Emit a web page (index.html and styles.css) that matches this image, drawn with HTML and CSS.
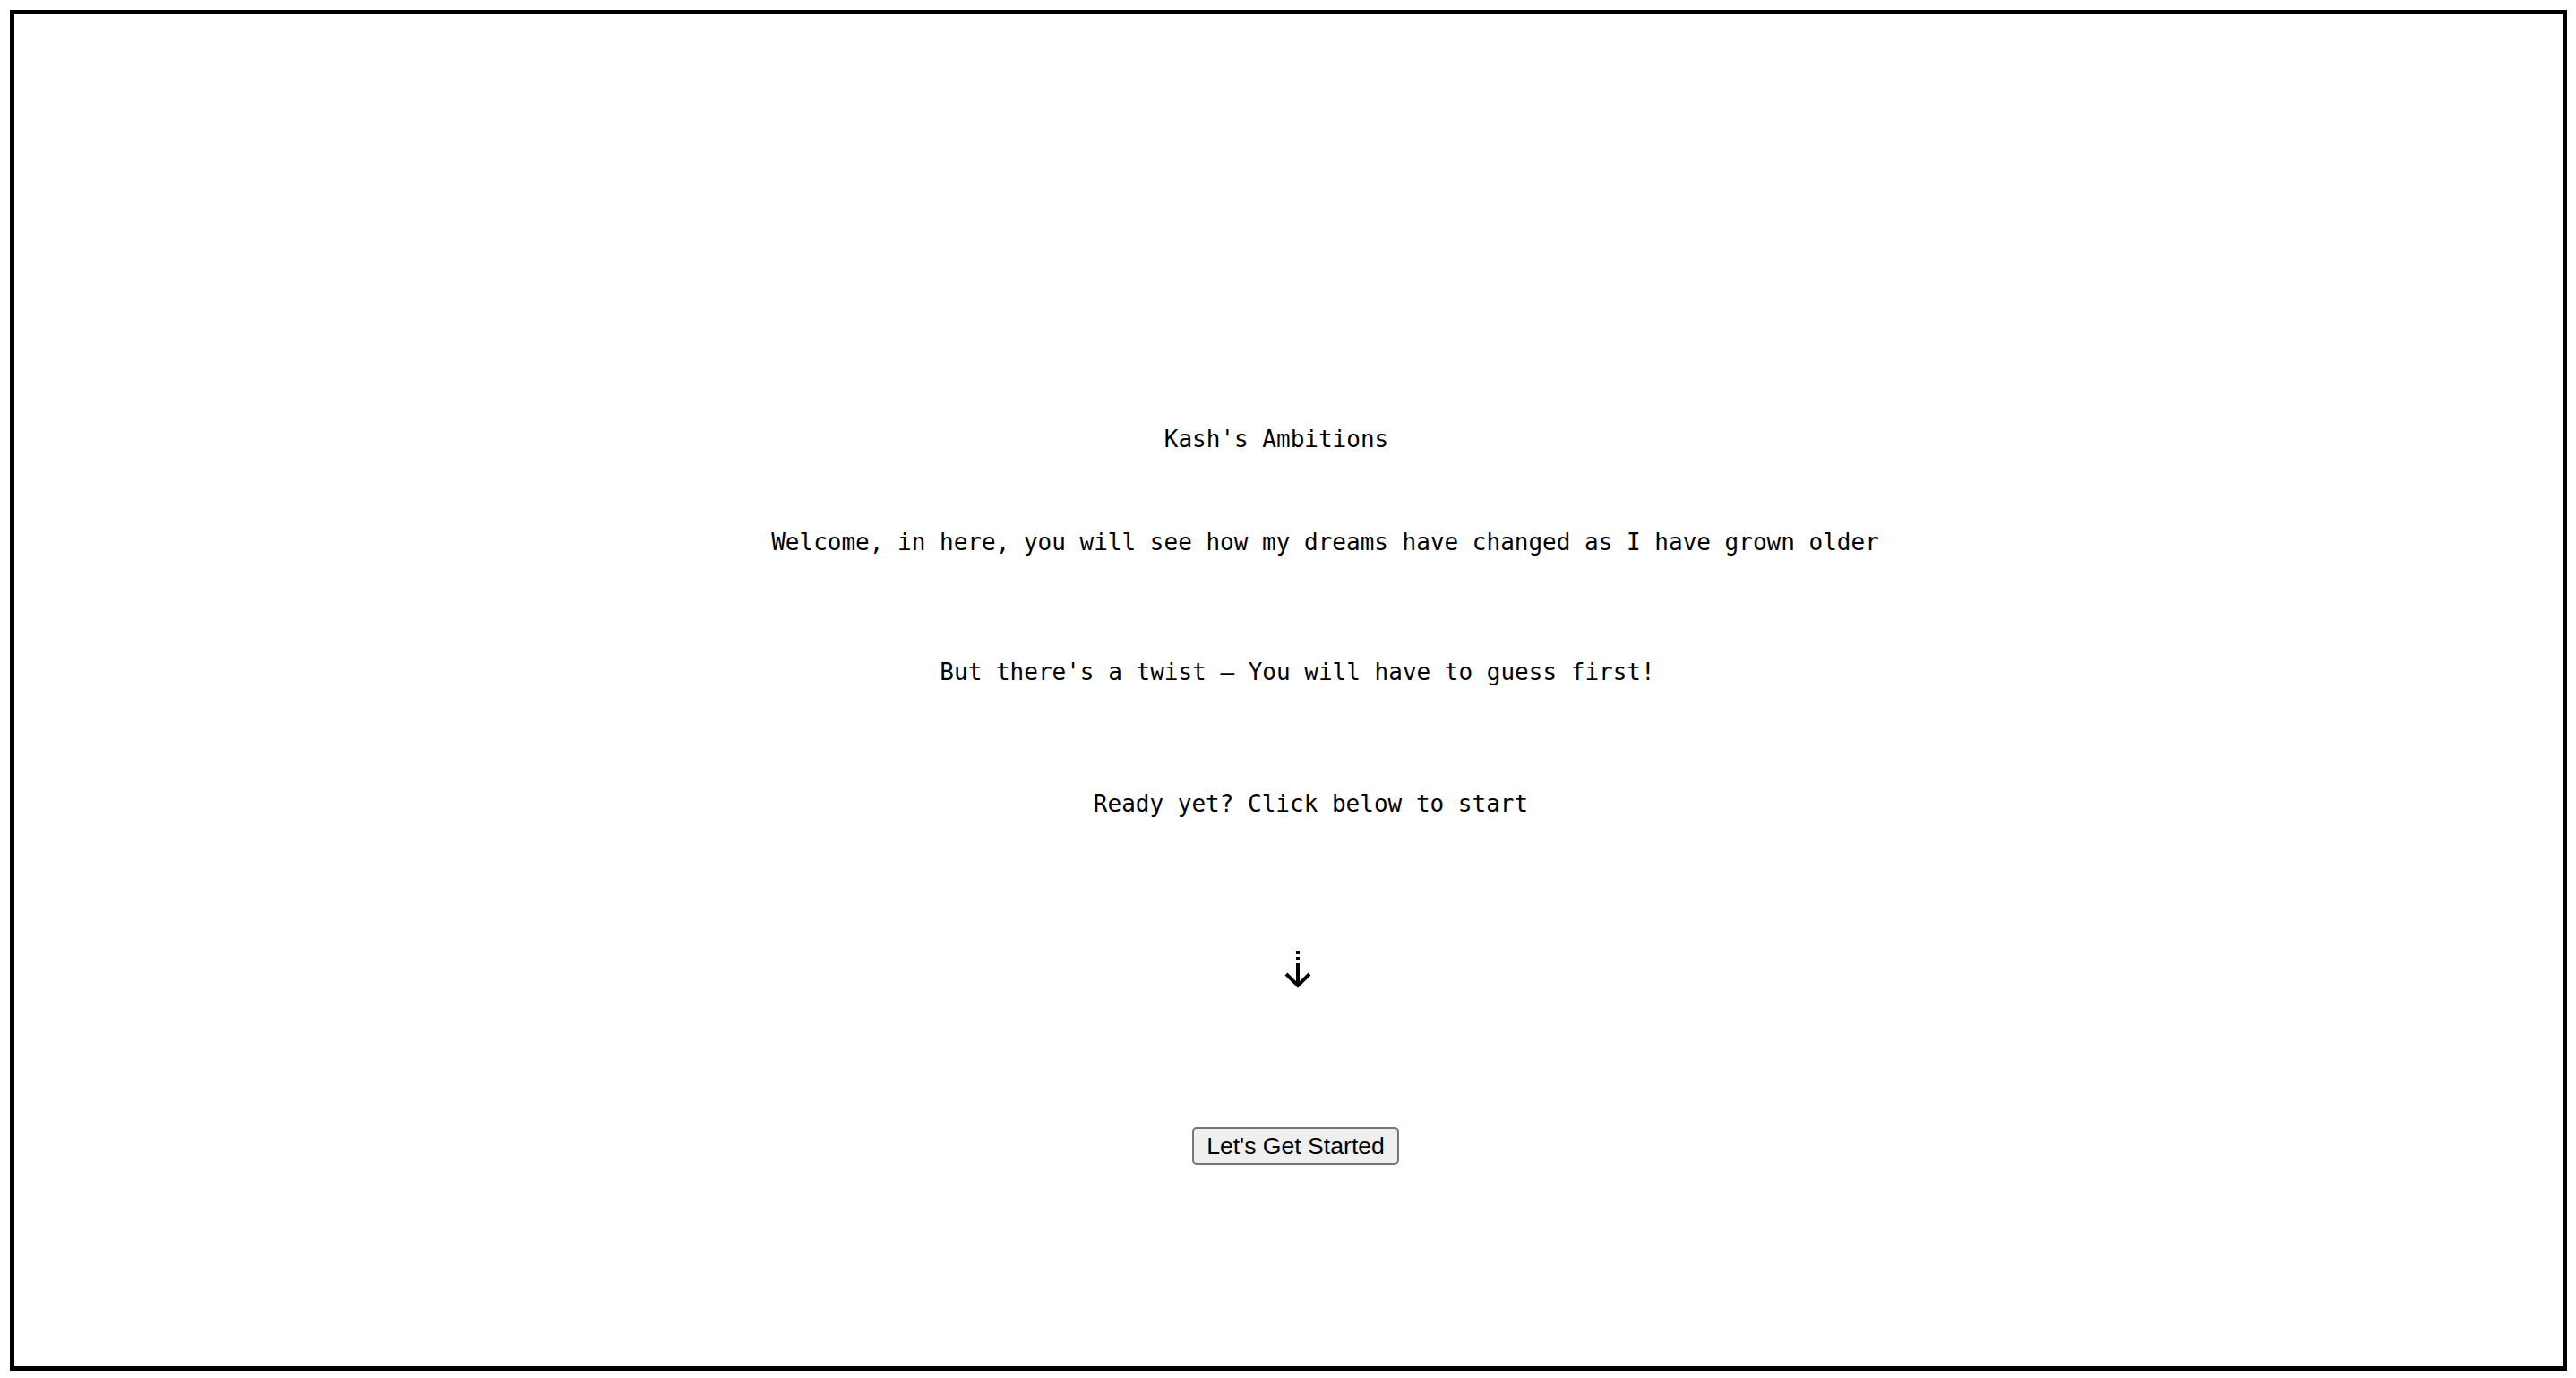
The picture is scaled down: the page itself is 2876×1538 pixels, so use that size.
FILE: index.html
```html
<!DOCTYPE html>
<html lang="en">
<head>
<meta charset="utf-8">
<title>Kash's Ambitions</title>
<link rel="stylesheet" href="styles.css">
</head>
<body>
<main class="frame">
  <h1 class="title">Kash's Ambitions</h1>
  <p class="line welcome">Welcome, in here, you will see how my dreams have changed as I have grown older</p>
  <p class="line twist">But there's a twist – You will have to guess first!</p>
  <p class="line ready">Ready yet? Click below to start</p>
  <div class="arrow">
    <svg width="30" height="42" viewBox="0 0 30 42" aria-hidden="true">
      <rect x="13" y="0" width="4" height="4" fill="#000"/>
      <rect x="13" y="7" width="4" height="4" fill="#000"/>
      <rect x="13" y="14" width="4" height="26" fill="#000"/>
      <polyline points="2,26 15,39 28,26" fill="none" stroke="#000" stroke-width="4"/>
    </svg>
  </div>
  <button class="start" type="button">Let's Get Started</button>
</main>
</body>
</html>
```

FILE: styles.css
```css
html, body {
  background: #fff;
}
body {
  margin: 11px 10px 8px 11px;
}
.frame {
  box-sizing: border-box;
  height: 1519px;
  border: 5px solid #000;
  display: flex;
  flex-direction: column;
  align-items: center;
  padding-top: 459px;
  font-family: "DejaVu Sans Mono", "Liberation Mono", monospace;
  font-size: 26px;
  color: #000;
}
.title, .line {
  margin: 0;
  font-weight: normal;
  font-size: 26px;
  line-height: 30px;
  white-space: pre;
}
.title {
  padding-right: 27px;
}
.welcome {
  margin-top: 85px;
  padding-left: 82px;
}
.twist {
  margin-top: 115px;
  padding-left: 20px;
}
.ready {
  margin-top: 117px;
  padding-left: 50px;
}
.arrow {
  margin-top: 149px;
  padding-left: 21px;
  height: 42px;
}
.arrow svg {
  display: block;
}
.start {
  margin-top: 155px;
  margin-left: 16px;
  font-family: "Liberation Sans", Arial, sans-serif;
  font-size: 26.6px;
  line-height: 30px;
  padding: 4px 14px;
  background: #efefef;
  color: #000;
  border: 2px solid #767676;
  border-radius: 5px;
}
```
